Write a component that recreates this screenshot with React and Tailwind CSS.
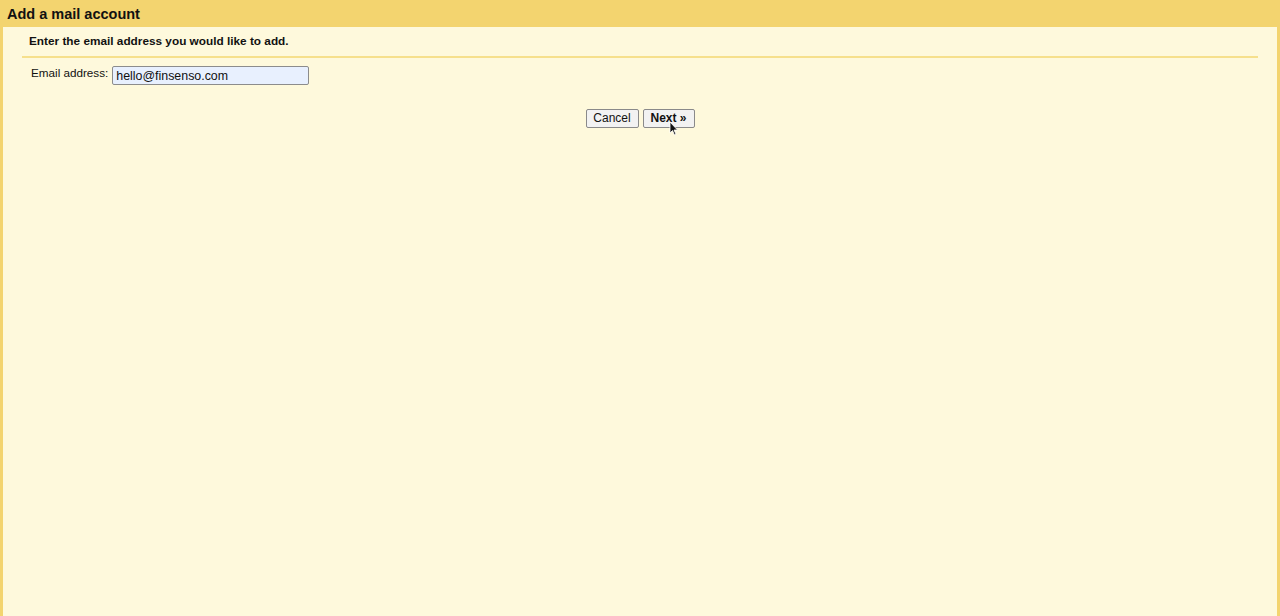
export default function App() {
  return (
    <main
      className="flex h-[616px] w-full flex-col bg-[#f3d46f]"
      style={{ fontFamily: '"Liberation Sans", Arial, sans-serif' }}
    >
      <header className="h-[27px] shrink-0 px-[7px] pt-[5px]">
        <h1 className="text-[14.5px] font-bold leading-[18px] text-[#111]">Add a mail account</h1>
      </header>
      <section className="mx-[3px] flex-1 bg-[#fef9dc] px-[19px]">
        <div className="border-b-2 border-[#f6e08c] pb-[8px] pl-[7px] pt-[7px]">
          <p className="text-[11.8px] font-bold leading-[14px] text-[#111]">
            Enter the email address you would like to add.
          </p>
        </div>
        <form className="pt-[8px]">
          <div className="flex items-start gap-[4px] pl-[9px]">
            <label className="text-[11.7px] leading-[14px] text-[#111]">Email address:</label>
            <input
              type="text"
              defaultValue="hello@finsenso.com"
              className="h-[19px] w-[197px] rounded-[2px] border border-[#8c8c8c] bg-[#e8f0fe] px-[3px] text-[12.4px] text-[#111] outline-none"
            />
          </div>
          <div className="mt-[24px] flex justify-center gap-[4px]">
            <button
              onClick={(e) => e.preventDefault()}
              className="h-[19px] w-[53px] rounded-[2px] border border-[#8a8a8a] bg-[#f2f2f2] text-[12px] leading-[17px] text-[#111]"
            >
              Cancel
            </button>
            <button
              onClick={(e) => e.preventDefault()}
              className="relative h-[19px] w-[52px] rounded-[2px] border border-[#8a8a8a] bg-[#f2f2f2] text-[12px] font-bold leading-[17px] text-[#111]"
            >
              Next »
              {/* mouse pointer */}
              <svg
                className="absolute left-[25px] top-[11px]"
                width="10"
                height="15"
                viewBox="0 0 10 15"
              >
                <path d="M1 1 L1 12 L3.5 9.5 L5.5 14 L7 13.3 L5 9 L8.5 9 Z" fill="#111" stroke="#fff" strokeWidth="0.8" />
              </svg>
            </button>
          </div>
        </form>
      </section>
    </main>
  );
}
